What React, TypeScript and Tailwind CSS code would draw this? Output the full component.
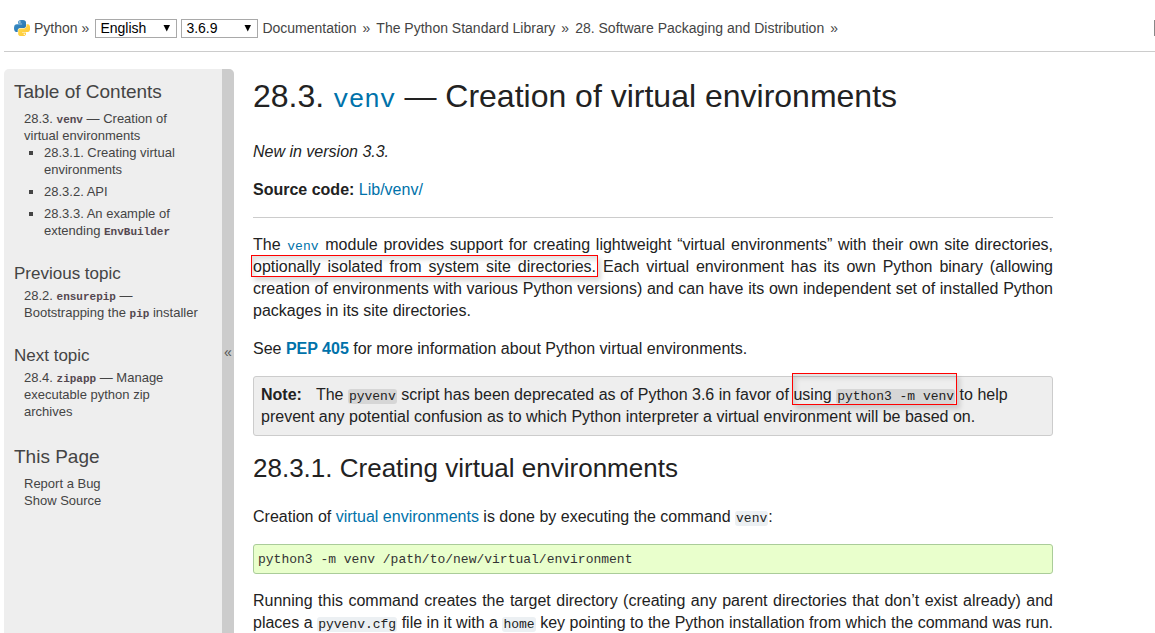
import type { ReactNode } from "react";

function PythonLogo() {
  return (
    <svg viewBox="0 0 110 110" className="h-4 w-4 shrink-0" aria-hidden="true">
      <defs>
        <linearGradient id="py-blue" x1="0" y1="0" x2="1" y2="1">
          <stop offset="0" stopColor="#3f92cc" />
          <stop offset="1" stopColor="#2470a8" />
        </linearGradient>
        <linearGradient id="py-yellow" x1="0" y1="0" x2="1" y2="1">
          <stop offset="0" stopColor="#ffe052" />
          <stop offset="1" stopColor="#ffc331" />
        </linearGradient>
      </defs>
      <path
        fill="url(#py-blue)"
        d="M54.9 0c-4.6 0-9 .4-12.8 1.1C30.8 3.1 28.7 7.3 28.7 15v10.300h26.800v3.400H18.700c-7.800 0-14.600 4.700-16.700 13.600-2.500 10.200-2.600 16.600 0 27.300 1.900 7.900 6.500 13.600 14.200 13.600h9.200V71c0-8.800 7.700-16.600 16.800-16.600H69c7.400 0 13.400-6.100 13.400-13.600V15c0-7.300-6.100-12.700-13.400-13.900C64.300.3 59.500 0 54.900 0zM40.400 8.200c2.800 0 5 2.300 5 5.100 0 2.800-2.300 5.100-5 5.100-2.800 0-5-2.300-5-5.100 0-2.800 2.200-5.100 5-5.100z"
      />
      <path
        fill="url(#py-yellow)"
        d="M85.600 28.700v11.900c0 9.200-7.800 17-16.800 17H42.100c-7.300 0-13.400 6.300-13.400 13.600v25.500c0 7.300 6.300 11.500 13.400 13.600 8.500 2.500 16.600 2.900 26.800 0 6.700-2 13.400-5.900 13.400-13.600V86.500H55.500v-3.400h40.200c7.800 0 10.700-5.400 13.400-13.600 2.800-8.400 2.700-16.500 0-27.300-1.900-7.800-5.600-13.600-13.400-13.600H85.600zM70.600 93.300c2.800 0 5 2.300 5 5.100 0 2.800-2.300 5.100-5 5.100-2.800 0-5-2.300-5-5.100 0-2.800 2.300-5.100 5-5.100z"
      />
    </svg>
  );
}

function Picker({ label, options, width }: { label: string; options: string[]; width: string }) {
  return (
    <span className={`relative inline-flex ${width}`}>
      <select
        aria-label={label}
        className="h-[19px] w-full appearance-none border border-[#a9a9a9] bg-white pl-1 text-sm leading-4 text-black"
      >
        {options.map((o) => (
          <option key={o}>{o}</option>
        ))}
      </select>
      <svg viewBox="0 0 8 7" className="pointer-events-none absolute top-1.5 right-1.5 h-[7px] w-2" aria-hidden="true">
        <path d="M0.500 0h6.500L3.750 6.500z" fill="#000" />
      </svg>
    </span>
  );
}

function SideCode({ children }: { children: ReactNode }) {
  return <code className="font-['Liberation_Mono',monospace] text-[11px] leading-none font-bold text-[#544850]">{children}</code>;
}

function Code({ children, tone }: { children: ReactNode; tone: string }) {
  return (
    <code className={`rounded-[3px] px-px font-['Liberation_Mono',monospace] text-[13px] leading-none ${tone}`}>
      {children}
    </code>
  );
}

function Marked({ children, frame }: { children: ReactNode; frame: string }) {
  return (
    <span className="relative">
      {children}
      <span className={frame} />
    </span>
  );
}

const link = "text-[#0072aa]";

export default function App() {
  return (
    <div className="flex min-h-screen flex-col overflow-x-clip bg-white pl-1 font-['Liberation_Sans',Arial,sans-serif] text-[#222222]">
      <nav className="flex h-[52px] items-center gap-1 border-b border-[#cccccc] pt-[5px] pl-2.5 text-sm whitespace-nowrap text-[#444444]">
        <PythonLogo />
        <a href="#python">Python</a>
        <span className="mr-0.5">»</span>
        <Picker label="Language" options={["English", "French", "Japanese"]} width="w-[82px]" />
        <Picker label="Version" options={["3.6.9", "3.7", "2.7"]} width="w-[77px]" />
        <div className="flex gap-1.5">
          <a href="#docs">Documentation</a>
          <span>»</span>
          <a href="#library">The Python Standard Library</a>
          <span>»</span>
          <a href="#distribution">28. Software Packaging and Distribution</a>
          <span>»</span>
        </div>
        <input type="search" aria-label="Quick search" className="-mr-[159px] ml-auto h-4 w-40 shrink-0 border border-[#888888]" />
      </nav>

      <div className="mt-[17px] flex grow gap-[19px]">
        <aside className="flex w-[230px] shrink-0 overflow-hidden rounded-t-[5px] bg-[#eeeeee] text-[13px] leading-[17px] text-[#444444]">
          <div className="grow pt-3 pl-2.5">
            <h3 className="text-[19px] leading-[22px]">Table of Contents</h3>
            <div className="mt-[7px] pl-2.5">
              <a href="#venv" className="block">
                28.3. <SideCode>venv</SideCode> — Creation of
                <br />
                virtual environments
              </a>
              <ul className="flex list-[square] flex-col gap-[5px] pl-5">
                <li>
                  <a href="#creating">28.3.1. Creating virtual environments</a>
                </li>
                <li>
                  <a href="#api">28.3.2. API</a>
                </li>
                <li>
                  <a href="#example">
                    28.3.3. An example of
                    <br />
                    extending <SideCode>EnvBuilder</SideCode>
                  </a>
                </li>
              </ul>
            </div>

            <h4 className="mt-6 text-[17px] leading-[22px]">Previous topic</h4>
            <a href="#ensurepip" className="mt-0.5 block pl-2.5">
              28.2. <SideCode>ensurepip</SideCode> —<br />
              Bootstrapping the <SideCode>pip</SideCode> installer
            </a>

            <h4 className="mt-6 text-[17px] leading-[22px]">Next topic</h4>
            <a href="#zipapp" className="mt-0.5 block pr-8 pl-2.5">
              28.4. <SideCode>zipapp</SideCode> — Manage
              <br />
              executable python zip archives
            </a>

            <h3 className="mt-[26px] text-[19px] leading-[22px]">This Page</h3>
            <ul className="mt-[7px] pl-2.5">
              <li>
                <a href="#bug">Report a Bug</a>
              </li>
              <li>
                <a href="#source">Show Source</a>
              </li>
            </ul>
          </div>
          <button
            type="button"
            aria-label="Collapse sidebar"
            className="flex w-3 shrink-0 items-center justify-center bg-[#cccccc] text-sm leading-none text-[#555555]"
          >
            «
          </button>
        </aside>

        <main className="max-w-[800px] min-w-0 grow text-base leading-[22px]">
          <h1 className="pt-2 text-[32px] leading-[38px]">
            28.3.{" "}
            <code className={`font-['Liberation_Mono',monospace] text-[26px] leading-none ${link}`}>venv</code> — Creation
            of virtual environments
          </h1>
          <p className="mt-[26px] italic">New in version 3.3.</p>
          <p className="mt-4">
            <strong>Source code:</strong>{" "}
            <a href="#lib" className={link}>
              Lib/venv/
            </a>
          </p>
          <hr className="mt-4 border-[#cccccc]" />
          <p className="mt-4 text-justify">
            The <Code tone={link}>venv</Code> module provides support for creating lightweight “virtual environments” with
            their own site directories,{" "}
            <Marked frame="pointer-events-none absolute -top-[3px] -right-0.5 -bottom-0.5 -left-0.5 border border-solid border-[#ff0000] shadow-[3px_4px_5px_rgba(0,0,0,0.15),inset_3px_4px_5px_rgba(0,0,0,0.12)]">
              optionally isolated from system site directories.
            </Marked>{" "}
            Each virtual environment has its own Python binary (allowing creation of environments with various Python
            versions) and can have its own independent set of installed Python packages in its site directories.
          </p>
          <p className="mt-4">
            See{" "}
            <a href="#pep" className={`font-bold ${link}`}>
              PEP 405
            </a>{" "}
            for more information about Python virtual environments.
          </p>
          <div className="mt-4 rounded-[3px] border border-[#cccccc] bg-[#eeeeee] px-[7px] py-[7px]">
            <strong className="mr-3.5">Note:</strong>
            The <Code tone="bg-[#d6d6d6]">pyvenv</Code> script has been deprecated as of Python 3.6 in favor of{" "}
            <Marked frame="pointer-events-none absolute -top-[13px] -right-0.5 -bottom-0.5 -left-px border border-solid border-[#ff0000] shadow-[3px_4px_5px_rgba(0,0,0,0.15),inset_3px_4px_5px_rgba(0,0,0,0.12)]">
              using <Code tone="bg-[#d6d6d6]">python3 -m venv</Code>
            </Marked>{" "}
            to help prevent any potential confusion as to which Python interpreter a virtual environment will be based on.
          </div>
          <h2 className="mt-[17px] text-[26px] leading-[30px]">28.3.1. Creating virtual environments</h2>
          <p className="mt-[23px]">
            Creation of{" "}
            <a href="#glossary" className={link}>
              virtual environments
            </a>{" "}
            is done by executing the command <Code tone="bg-[#ecf0f3]">venv</Code>:
          </p>
          <pre className="mt-4 rounded-[3px] border border-[#aacc99] bg-[#e9ffcc] px-1 pt-1.5 pb-1 font-['Liberation_Mono',monospace] text-[13px] leading-[18px] text-[#333333]">
            python3 -m venv /path/to/new/virtual/environment
          </pre>
          <p className="mt-4 text-justify [text-align-last:justify]">
            Running this command creates the target directory (creating any parent directories that don’t exist already) and
            places a <Code tone="bg-[#ecf0f3]">pyvenv.cfg</Code> file in it with a{" "}
            <Code tone="bg-[#ecf0f3]">home</Code> key pointing to the Python installation from which the command was run.
          </p>
        </main>
      </div>
    </div>
  );
}
